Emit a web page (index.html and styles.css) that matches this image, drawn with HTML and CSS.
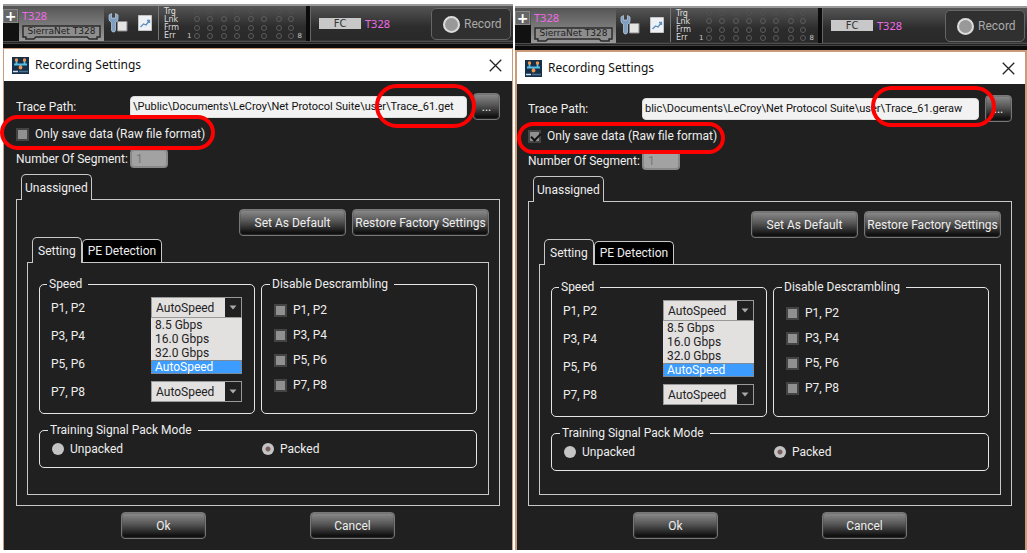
FILE: index.html
```html
<!DOCTYPE html>
<html lang="en">
<head>
<meta charset="utf-8">
<title>Recording Settings</title>
<link rel="stylesheet" href="styles.css">
</head>
<body>
<svg class="defs" aria-hidden="true">
  <defs>
    <symbol id="i-wrench" viewBox="0 0 20 20">
      <path d="M9.500 8.500h9.500v9.500H9.500z" fill="#e4e4e4" stroke="#8d8d8d" stroke-width="1"/>
      <path d="M1 2v4q0 2 2.500 3.500V17q0 2 2 2t2-2V9.500Q10 8 10 6V2L7.500.5V5H3.500V.5z" fill="#7f9fc2" stroke="#c3d3e4" stroke-width=".7"/>
    </symbol>
    <symbol id="i-chart" viewBox="0 0 14 16">
      <path d="M.5.5h13v15H.5z" fill="#eef1f4" stroke="#c4c4c4"/>
      <path d="M2.500 12l3-3 2.500 1 3.500-4.500M9 5.500h2.500V8" fill="none" stroke="#5a8fc0" stroke-width="1.300"/>
    </symbol>
    <symbol id="i-leds" viewBox="0 0 102 34">
      <g fill="none" stroke="#5c5c5c">
        <g id="led-row"><circle cx="4" cy="30" r="2.500"/><circle cx="17" cy="30" r="2.500"/><circle cx="31" cy="30" r="2.500"/><circle cx="44" cy="30" r="2.500"/><circle cx="58" cy="30" r="2.500"/><circle cx="71" cy="30" r="2.500"/><circle cx="86" cy="30" r="2.500"/><circle cx="98" cy="30" r="2.500"/></g>
        <use href="#led-row" y="-8"/><use href="#led-row" y="-17"/><use href="#led-row" y="-25" opacity=".35"/>
      </g>
    </symbol>
    <symbol id="i-app" viewBox="0 0 17 17">
      <path d="M0 0h17v17H0z" fill="#173049"/>
      <path d="M4.500 4v4M12.500 4v4M2 7.500h13M8.500 8v3" stroke="#59bde8" stroke-width="1.800" fill="none"/>
      <circle cx="4.500" cy="3" r="1.700" fill="#f0954a"/><circle cx="12.500" cy="3" r="1.700" fill="#f0954a"/><circle cx="8.500" cy="10.500" r="1.900" fill="#f0954a"/>
      <path d="M1 14.500h5" stroke="#cfe2ee" stroke-width="1.500"/><path d="M7 14.500h9" stroke="#4c7391" stroke-width="1.500"/>
    </symbol>
    <symbol id="i-close" viewBox="0 0 12 12"><path d="M.7.7l10.600 10.600M11.300.7L.7 11.300" stroke="#222" stroke-width="1.200"/></symbol>
    <symbol id="i-arrow" viewBox="0 0 8 5"><path d="M.5.5h7L4 4.500z" fill="#aaa"/></symbol>
    <symbol id="i-badge" viewBox="0 0 80 15" preserveAspectRatio="none">
      <path d="M1 1h78v11h-3v2h-8l-2-2H14l-2 2H4v-2H1z" fill="#8d8d8d" stroke="#2b2b2b" stroke-width="1.500"/>
    </symbol>
  </defs>
</svg>
<main class="compare">

  <section class="panel">
    <header class="toolbar">
      <button class="add" aria-label="Add"><span class="plus">+</span></button>
      <div class="module">
        <span class="device">T328</span>
        <span class="badge"><svg class="badge-shape"><use href="#i-badge"/></svg><span class="badge-text">SierraNet T328</span></span>
      </div>
      <svg class="tool-wrench"><use href="#i-wrench"/></svg>
      <svg class="tool-chart"><use href="#i-chart"/></svg>
      <div class="status">
        <div class="status-names"><span>Trg</span><span>Lnk</span><span>Frm</span><span>Err</span></div>
        <span class="port">1</span>
        <svg class="leds"><use href="#i-leds"/></svg>
        <span class="port">8</span>
      </div>
      <div class="protocol"><span class="fc">FC</span><span class="device">T328</span></div>
      <button class="record"><span class="record-dot"></span>Record</button>
    </header>
    <div class="dialog">
      <div class="titlebar">
        <svg class="app-icon"><use href="#i-app"/></svg>
        <h1 class="title">Recording Settings</h1>
        <button class="close" aria-label="Close"><svg class="close-icon"><use href="#i-close"/></svg></button>
      </div>
      <form class="content">
        <div class="path-row">
          <label class="field-label" for="a-path">Trace Path:</label>
          <input class="path" id="a-path" type="text" value="\Public\Documents\LeCroy\Net Protocol Suite\user\Trace_61.get">
          <button class="btn browse" type="button">...</button>
          <span class="ring ring-path"></span>
        </div>
        <div class="raw-row">
          <label class="check"><input type="checkbox">Only save data (Raw file format)</label>
          <span class="ring ring-raw"></span>
        </div>
        <div class="segment-row">
          <label class="field-label" for="a-seg">Number Of Segment:</label>
          <input class="segment" id="a-seg" type="text" value="1" disabled>
        </div>
        <div class="tabs outer-tabs"><button class="tab active" type="button">Unassigned</button></div>
        <div class="pane outer-pane">
          <div class="actions">
            <button class="btn set-default" type="button">Set As Default</button>
            <button class="btn restore" type="button">Restore Factory Settings</button>
          </div>
          <div class="tabs inner-tabs">
            <button class="tab active" type="button">Setting</button>
            <button class="tab" type="button">PE Detection</button>
          </div>
          <div class="pane inner-pane">
            <div class="groups">
              <fieldset class="group speed">
                <legend>Speed</legend>
                <div class="speed-row"><label for="a-s1">P1, P2</label>
                  <span class="combo"><select id="a-s1"><option>AutoSpeed</option></select><span class="combo-arrow"><svg><use href="#i-arrow"/></svg></span>
                    <ul class="options"><li>8.5 Gbps</li><li>16.0 Gbps</li><li>32.0 Gbps</li><li class="selected">AutoSpeed</li></ul></span></div>
                <div class="speed-row"><label for="a-s2">P3, P4</label>
                  <span class="combo covered"><select id="a-s2"></select></span></div>
                <div class="speed-row"><label for="a-s3">P5, P6</label>
                  <span class="combo covered"><select id="a-s3"></select></span></div>
                <div class="speed-row"><label for="a-s4">P7, P8</label>
                  <span class="combo"><select id="a-s4"><option>AutoSpeed</option></select><span class="combo-arrow"><svg><use href="#i-arrow"/></svg></span></span></div>
              </fieldset>
              <fieldset class="group descramble">
                <legend>Disable Descrambling</legend>
                <label class="check"><input type="checkbox">P1, P2</label>
                <label class="check"><input type="checkbox">P3, P4</label>
                <label class="check"><input type="checkbox">P5, P6</label>
                <label class="check"><input type="checkbox">P7, P8</label>
              </fieldset>
            </div>
            <fieldset class="group training">
              <legend>Training Signal Pack Mode</legend>
              <label class="radio"><input type="radio" name="a-pack">Unpacked</label>
              <label class="radio"><input type="radio" name="a-pack" checked>Packed</label>
            </fieldset>
          </div>
        </div>
        <div class="footer">
          <button class="btn" type="button">Ok</button>
          <button class="btn" type="button">Cancel</button>
        </div>
      </form>
    </div>
  </section>

  <section class="panel panel-raw">
    <header class="toolbar">
      <button class="add" aria-label="Add"><span class="plus">+</span></button>
      <div class="module">
        <span class="device">T328</span>
        <span class="badge"><svg class="badge-shape"><use href="#i-badge"/></svg><span class="badge-text">SierraNet T328</span></span>
      </div>
      <svg class="tool-wrench"><use href="#i-wrench"/></svg>
      <svg class="tool-chart"><use href="#i-chart"/></svg>
      <div class="status">
        <div class="status-names"><span>Trg</span><span>Lnk</span><span>Frm</span><span>Err</span></div>
        <span class="port">1</span>
        <svg class="leds"><use href="#i-leds"/></svg>
        <span class="port">8</span>
      </div>
      <div class="protocol"><span class="fc">FC</span><span class="device">T328</span></div>
      <button class="record"><span class="record-dot"></span>Record</button>
    </header>
    <div class="dialog">
      <div class="titlebar">
        <svg class="app-icon"><use href="#i-app"/></svg>
        <h1 class="title">Recording Settings</h1>
        <button class="close" aria-label="Close"><svg class="close-icon"><use href="#i-close"/></svg></button>
      </div>
      <form class="content">
        <div class="path-row">
          <label class="field-label" for="b-path">Trace Path:</label>
          <input class="path" id="b-path" type="text" value="blic\Documents\LeCroy\Net Protocol Suite\user\Trace_61.geraw">
          <button class="btn browse" type="button">...</button>
          <span class="ring ring-path"></span>
        </div>
        <div class="raw-row">
          <label class="check"><input type="checkbox" checked>Only save data (Raw file format)</label>
          <span class="ring ring-raw"></span>
        </div>
        <div class="segment-row">
          <label class="field-label" for="b-seg">Number Of Segment:</label>
          <input class="segment" id="b-seg" type="text" value="1" disabled>
        </div>
        <div class="tabs outer-tabs"><button class="tab active" type="button">Unassigned</button></div>
        <div class="pane outer-pane">
          <div class="actions">
            <button class="btn set-default" type="button">Set As Default</button>
            <button class="btn restore" type="button">Restore Factory Settings</button>
          </div>
          <div class="tabs inner-tabs">
            <button class="tab active" type="button">Setting</button>
            <button class="tab" type="button">PE Detection</button>
          </div>
          <div class="pane inner-pane">
            <div class="groups">
              <fieldset class="group speed">
                <legend>Speed</legend>
                <div class="speed-row"><label for="b-s1">P1, P2</label>
                  <span class="combo"><select id="b-s1"><option>AutoSpeed</option></select><span class="combo-arrow"><svg><use href="#i-arrow"/></svg></span>
                    <ul class="options"><li>8.5 Gbps</li><li>16.0 Gbps</li><li>32.0 Gbps</li><li class="selected">AutoSpeed</li></ul></span></div>
                <div class="speed-row"><label for="b-s2">P3, P4</label>
                  <span class="combo covered"><select id="b-s2"></select></span></div>
                <div class="speed-row"><label for="b-s3">P5, P6</label>
                  <span class="combo covered"><select id="b-s3"></select></span></div>
                <div class="speed-row"><label for="b-s4">P7, P8</label>
                  <span class="combo"><select id="b-s4"><option>AutoSpeed</option></select><span class="combo-arrow"><svg><use href="#i-arrow"/></svg></span></span></div>
              </fieldset>
              <fieldset class="group descramble">
                <legend>Disable Descrambling</legend>
                <label class="check"><input type="checkbox">P1, P2</label>
                <label class="check"><input type="checkbox">P3, P4</label>
                <label class="check"><input type="checkbox">P5, P6</label>
                <label class="check"><input type="checkbox">P7, P8</label>
              </fieldset>
            </div>
            <fieldset class="group training">
              <legend>Training Signal Pack Mode</legend>
              <label class="radio"><input type="radio" name="b-pack">Unpacked</label>
              <label class="radio"><input type="radio" name="b-pack" checked>Packed</label>
            </fieldset>
          </div>
        </div>
        <div class="footer">
          <button class="btn" type="button">Ok</button>
          <button class="btn" type="button">Cancel</button>
        </div>
      </form>
    </div>
  </section>
</main>
</body>
</html>
```

FILE: styles.css
```css
* { box-sizing: border-box; }
body {
  margin: 0;
  background: #fff;
  color: #eee;
  font: 12px/16px Roboto, "Noto Sans", sans-serif;
}
button, input, select { font: inherit; color: inherit; margin: 0; }
.defs { position: absolute; width: 0; height: 0; }
.compare {
  display: grid;
  grid-template-columns: 510fr 512fr;
  gap: 2px;
  min-height: 100vh;
  padding: 4px 0 3px 3px;
}
.panel { display: flex; flex-direction: column; min-width: 0; }
.panel-raw { padding-top: 2px; }

/* Toolbar */
.toolbar {
  display: flex;
  height: 44px;
  border-top: 2px solid #999;
  border-bottom: 4px solid #0b0b0b;
  background: linear-gradient(#555, #2c2c2c 55%, #292929 90%, #555 93%, #222 96%, #555);
}
.add {
  display: flex;
  width: 16px;
  height: 35px;
  padding: 3px 1px 0 0;
  border: 0;
  background: linear-gradient(#555 17px, #111 17px);
}
.plus {
  width: 15px;
  height: 14px;
  border: 1px solid #888;
  background: #666;
  color: #fff;
  font: bold 14px/12px "DejaVu Sans", sans-serif;
  text-align: center;
}
.module {
  display: flex;
  flex-direction: column;
  gap: 1px;
  width: 85px;
  height: 35px;
  padding: 2px 3px 0;
  background: linear-gradient(#555, #999);
}
.device { color: #f06ae8; font: 11px/16px "Noto Sans", sans-serif; }
.badge { position: relative; height: 15px; text-align: center; }
.badge-shape { position: absolute; left: 0; top: 0; width: 100%; height: 100%; }
.badge-text {
  position: relative;
  display: block;
  color: #222;
  font: 9px/13px "DejaVu Sans", sans-serif;
}
.tool-wrench { width: 20px; height: 20px; margin: 7px 0 0 4px; }
.tool-chart { width: 14px; height: 16px; margin: 9px 0 0 10px; }
.status {
  display: flex;
  gap: 2px;
  width: 148px;
  height: 34px;
  margin-left: 6px;
  padding-left: 5px;
  border-left: 1px solid #777;
}
.status-names {
  display: flex;
  flex-direction: column;
  width: 21px;
  padding-top: 2px;
  color: #ddd;
  font: 8px/8px "DejaVu Sans", sans-serif;
}
.port { align-self: flex-end; color: #ccc; font: 7px/8px "DejaVu Sans", sans-serif; }
.leds { width: 102px; height: 34px; }
.protocol {
  display: flex;
  align-items: center;
  gap: 4px;
  height: 35px;
  padding-left: 9px;
  border-left: 4px solid #0b0b0b;
  box-shadow: inset 1px 0 #666;
}
.fc {
  width: 42px;
  background: #c8c8c8;
  color: #333;
  font: 10px/11px "DejaVu Sans", sans-serif;
  text-align: center;
}
.record {
  display: flex;
  align-items: center;
  gap: 4px;
  width: 80px;
  height: 32px;
  margin: 2px 2px 0 auto;
  padding: 0 0 0 11px;
  border: 1px solid #666;
  border-radius: 5px;
  background: #303030;
  color: #aaa;
}
.record-dot { width: 17px; height: 17px; border: 2px solid #ddd; border-radius: 50%; background: #999; }

/* Dialog */
.dialog {
  display: flex;
  flex: 1;
  flex-direction: column;
  border: 1px solid #c99b7b;
  border-bottom: 0;
  background: #202020;
}
.panel-raw .dialog { border-width: 2px 2px 0; }
.titlebar {
  display: flex;
  align-items: center;
  height: 32px;
  padding: 0 10px 0 8px;
  background: #fff;
  color: #111;
}
.app-icon { width: 17px; height: 17px; }
.title { margin: 0 auto 0 6px; font: 12px/16px "Noto Sans", sans-serif; }
.close { width: 13px; height: 13px; padding: 0; border: 0; background: none; }
.close-icon { display: block; width: 13px; height: 13px; }
.content { display: flex; flex: 1; flex-direction: column; padding: 12px 12px 0; }
.panel-raw .content { padding: 11px 13px 0 11px; }
.btn {
  height: 27px;
  padding: 0;
  border: 1px solid #777;
  border-radius: 4px;
  background: linear-gradient(#8c8c8c, #555 45%, #111 90%);
  box-shadow: inset 0 0 0 1px #4c4c4c55;
  color: #eee;
}
.path-row, .raw-row { position: relative; display: flex; align-items: center; }
.field-label { width: 114px; white-space: nowrap; }
.path {
  flex: 1;
  min-width: 0;
  height: 22px;
  padding: 0 2px;
  border: 1px solid #ddd;
  border-radius: 4px;
  background: #f2f2f2;
  color: #111;
  font-size: 11px;
}
.browse { width: 27px; margin-left: 6px; }
.raw-row { height: 28px; }
.check, .radio { display: flex; align-items: center; gap: 6px; }
.check input {
  appearance: none;
  width: 13px;
  height: 13px;
  border: 2px solid #444;
  background: #909090;
}
.check input:checked::before {
  content: "";
  display: block;
  width: 8px;
  height: 4px;
  margin: 1px 0 0 1px;
  border: solid #111;
  border-width: 0 0 2px 2px;
  transform: rotate(-45deg);
}
.segment-row { display: flex; align-items: center; height: 21px; }
.segment {
  width: 38px;
  height: 19px;
  padding: 0 4px;
  border: 2px solid #888;
  border-radius: 4px;
  background: #a2a2a2;
  color: #777;
}
.ring { position: absolute; z-index: 3; border: 4px solid #f00; border-radius: 22px; pointer-events: none; }
.ring-path { top: -9px; right: 24px; width: 101px; height: 44px; }
.ring-raw { top: -5px; left: -16px; width: 215px; height: 35px; }
.panel-raw .ring-path { top: -9px; right: 16px; width: 125px; height: 41px; }
.panel-raw .ring-raw { top: 0; left: -11px; width: 208px; height: 32px; }

.tabs { display: flex; align-items: flex-end; }
.outer-tabs { padding-left: 5px; margin-top: 5px; }
.inner-tabs { padding-left: 5px; margin-top: 1px; }
.tab {
  position: relative;
  height: 23px;
  padding: 0 5px;
  border: 1px solid #c8c8c8;
  border-bottom: 0;
  border-radius: 5px 5px 0 0;
  background: #000;
  color: #eee;
}
.outer-tabs .tab { padding: 0 3px; }
.tab.active { z-index: 1; height: 26px; margin-bottom: -1px; background: #202020; }
.pane { border: 1px solid #c8c8c8; }
.outer-pane { display: flex; flex: 1; flex-direction: column; padding: 9px 10px 10px; }
.actions { display: flex; justify-content: flex-end; gap: 6px; }
.set-default { width: 107px; }
.restore { width: 137px; white-space: nowrap; }
.inner-pane { flex: 1; padding: 13px 11px 0; }
.panel-raw .inner-pane { padding-top: 14px; }
.groups { display: grid; grid-template-columns: 1fr 1fr; gap: 6px; }
.group { min-width: 0; margin: 0; border: 1px solid #e4e4e4; border-radius: 5px; }
.group legend { margin-left: -4px; padding: 0 6px 0 2px; }
.speed { display: flex; flex-direction: column; gap: 7px; padding: 5px 12px 11px 11px; }
.speed-row { display: flex; justify-content: space-between; align-items: center; }
.combo { position: relative; width: 91px; height: 21px; }
.covered { visibility: hidden; }
.combo select {
  appearance: none;
  display: block;
  width: 100%;
  height: 21px;
  padding: 0 4px;
  border: 1px solid #999;
  border-radius: 0;
  background: #e3e0e0;
  color: #222;
}
.combo-arrow {
  position: absolute;
  top: 1px;
  right: 1px;
  display: grid;
  place-items: center;
  width: 16px;
  height: 19px;
  background: #202020;
  pointer-events: none;
}
.combo-arrow svg { width: 8px; height: 5px; }
.options {
  position: absolute;
  z-index: 2;
  top: 21px;
  left: 0;
  width: 100%;
  margin: 0;
  padding: 0;
  background: #e3e0e0;
  color: #222;
  line-height: 14px;
  list-style: none;
}
.options li { padding-left: 4px; }
.options .selected { background: #3c9cff; color: #fff; outline: 1px dotted #b87838; outline-offset: -1px; }
.descramble { display: flex; flex-direction: column; gap: 9px; padding: 10px 12px; }
.training {
  display: grid;
  grid-template-columns: 210px 1fr;
  margin-top: 8px;
  padding: 3px 12px 10px;
}
.radio input {
  appearance: none;
  width: 12px;
  height: 12px;
  border-radius: 50%;
  background: #c4c4c4;
}
.radio input:checked { background: radial-gradient(#7a6060 0 2px, #c4c4c4 3px); }
.footer { display: flex; justify-content: center; gap: 104px; padding: 6px 0 11px; }
.footer .btn { width: 85px; }
```
